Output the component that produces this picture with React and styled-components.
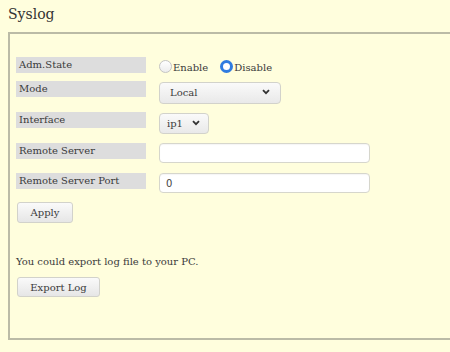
import React from "react";
import styled, { createGlobalStyle } from "styled-components";

const GlobalStyle = createGlobalStyle`
  html, body {
    margin: 0;
    padding: 0;
    overflow: hidden;
    background: #fffedd;
  }
  body {
    font-family: "DejaVu Serif", serif;
    color: #333;
  }
`;

const Page = styled.div`
  padding: 6px 0 0 8px;
  width: 460px;
`;

const Title = styled.h1`
  margin: 0 0 10px;
  font-size: 14px;
  line-height: 16px;
  font-weight: normal;
  color: #333;
`;

const Panel = styled.div`
  box-sizing: border-box;
  height: 308px;
  border: 2px solid #bbbba6;
  padding: 23px 6px 0;
  display: flex;
  flex-direction: column;
  align-items: flex-start;
`;

const Row = styled.div`
  display: flex;
  align-items: flex-start;
  height: ${(p) => p.$h}px;
  gap: 13px;
`;

const Label = styled.div`
  width: 127px;
  height: 16px;
  line-height: 16px;
  padding-left: 3px;
  background: #dddddd;
  font-size: 10px;
  color: #3a3a3a;
`;

const Radios = styled.div`
  display: flex;
  align-items: center;
  height: 16px;
  padding-top: 1px;
  gap: 12px;
`;

const RadioLabel = styled.label`
  display: flex;
  align-items: center;
  font-size: 10px;
  line-height: 16px;
  color: #3a3a3a;

  span {
    padding-top: 4px;
  }
`;

const Radio = styled.input`
  appearance: none;
  box-sizing: border-box;
  width: 13px;
  height: 13px;
  margin: 0 1px 0 0;
  border-radius: 50%;
  border: 1px solid #c4c4c4;
  background: linear-gradient(#ffffff, #ededed);

  &:checked {
    border: 3.5px solid #2f7be0;
    background: #fff;
  }
`;

const SelectWrap = styled.div`
  position: relative;
  width: ${(p) => p.$w}px;
  height: ${(p) => p.$h}px;
`;

const Select = styled.select`
  appearance: none;
  box-sizing: border-box;
  width: 100%;
  height: 100%;
  border: 1px solid #d2d2cb;
  border-radius: 4px;
  background: linear-gradient(#fafafa, #e9e9e9);
  padding: 0 0 0 ${(p) => p.$pl}px;
  font-family: "DejaVu Serif", serif;
  font-size: 10px;
  color: #3a3a3a;
  outline: none;
`;

const Chevron = styled.svg`
  position: absolute;
  right: ${(p) => p.$r}px;
  top: 50%;
  margin-top: -3px;
  pointer-events: none;
`;

const TextInput = styled.input`
  box-sizing: border-box;
  width: 211px;
  height: 20px;
  border: 1px solid #d6d6cc;
  border-radius: 4px;
  background: #fff;
  padding: 0 6px;
  font-family: "DejaVu Sans", sans-serif;
  font-size: 10px;
  color: #444;
  box-shadow: inset 0 1px 1px rgba(0, 0, 0, 0.04);
  outline: none;
`;

const Button = styled.button`
  box-sizing: border-box;
  width: ${(p) => p.$w}px;
  height: ${(p) => p.$h}px;
  margin-left: 1px;
  border: 1px solid #d2d2cb;
  border-radius: 3px;
  background: linear-gradient(#fafafa, #e6e6e6);
  font-family: "DejaVu Serif", serif;
  font-size: 10px;
  color: #3a3a3a;
  padding: 0;
  cursor: pointer;
`;

const Note = styled.p`
  margin: 32px 0 8px;
  font-size: 10px;
  line-height: 14px;
  color: #3a3a3a;
`;

function DownChevron({ right }) {
  return (
    <Chevron $r={right} width="8" height="6" viewBox="0 0 8 6">
      <path d="M1 1.2 L4 4.2 L7 1.2" fill="none" stroke="#333" strokeWidth="1.8" />
    </Chevron>
  );
}

export default function App() {
  return (
    <Page>
      <GlobalStyle />
      <Title>Syslog</Title>
      <Panel>
        <Row $h={24}>
          <Label>Adm.State</Label>
          <Radios>
            <RadioLabel>
              <Radio type="radio" name="state" />
              <span>Enable</span>
            </RadioLabel>
            <RadioLabel>
              <Radio type="radio" name="state" defaultChecked />
              <span>Disable</span>
            </RadioLabel>
          </Radios>
        </Row>
        <Row $h={31}>
          <Label>Mode</Label>
          <SelectWrap $w={122} $h={22}>
            <Select $pl={10} defaultValue="Local">
              <option>Local</option>
              <option>Remote</option>
            </Select>
            <DownChevron right={11} />
          </SelectWrap>
        </Row>
        <Row $h={31}>
          <Label>Interface</Label>
          <SelectWrap $w={50} $h={21}>
            <Select $pl={7} defaultValue="ip1">
              <option>ip1</option>
            </Select>
            <DownChevron right={9} />
          </SelectWrap>
        </Row>
        <Row $h={30}>
          <Label>Remote Server</Label>
          <TextInput type="text" defaultValue="" />
        </Row>
        <Row $h={29}>
          <Label>Remote Server Port</Label>
          <TextInput type="text" defaultValue="0" />
        </Row>
        <Button $w={56} $h={21}>Apply</Button>
        <Note>You could export log file to your PC.</Note>
        <Button $w={83} $h={20}>Export Log</Button>
      </Panel>
    </Page>
  );
}
